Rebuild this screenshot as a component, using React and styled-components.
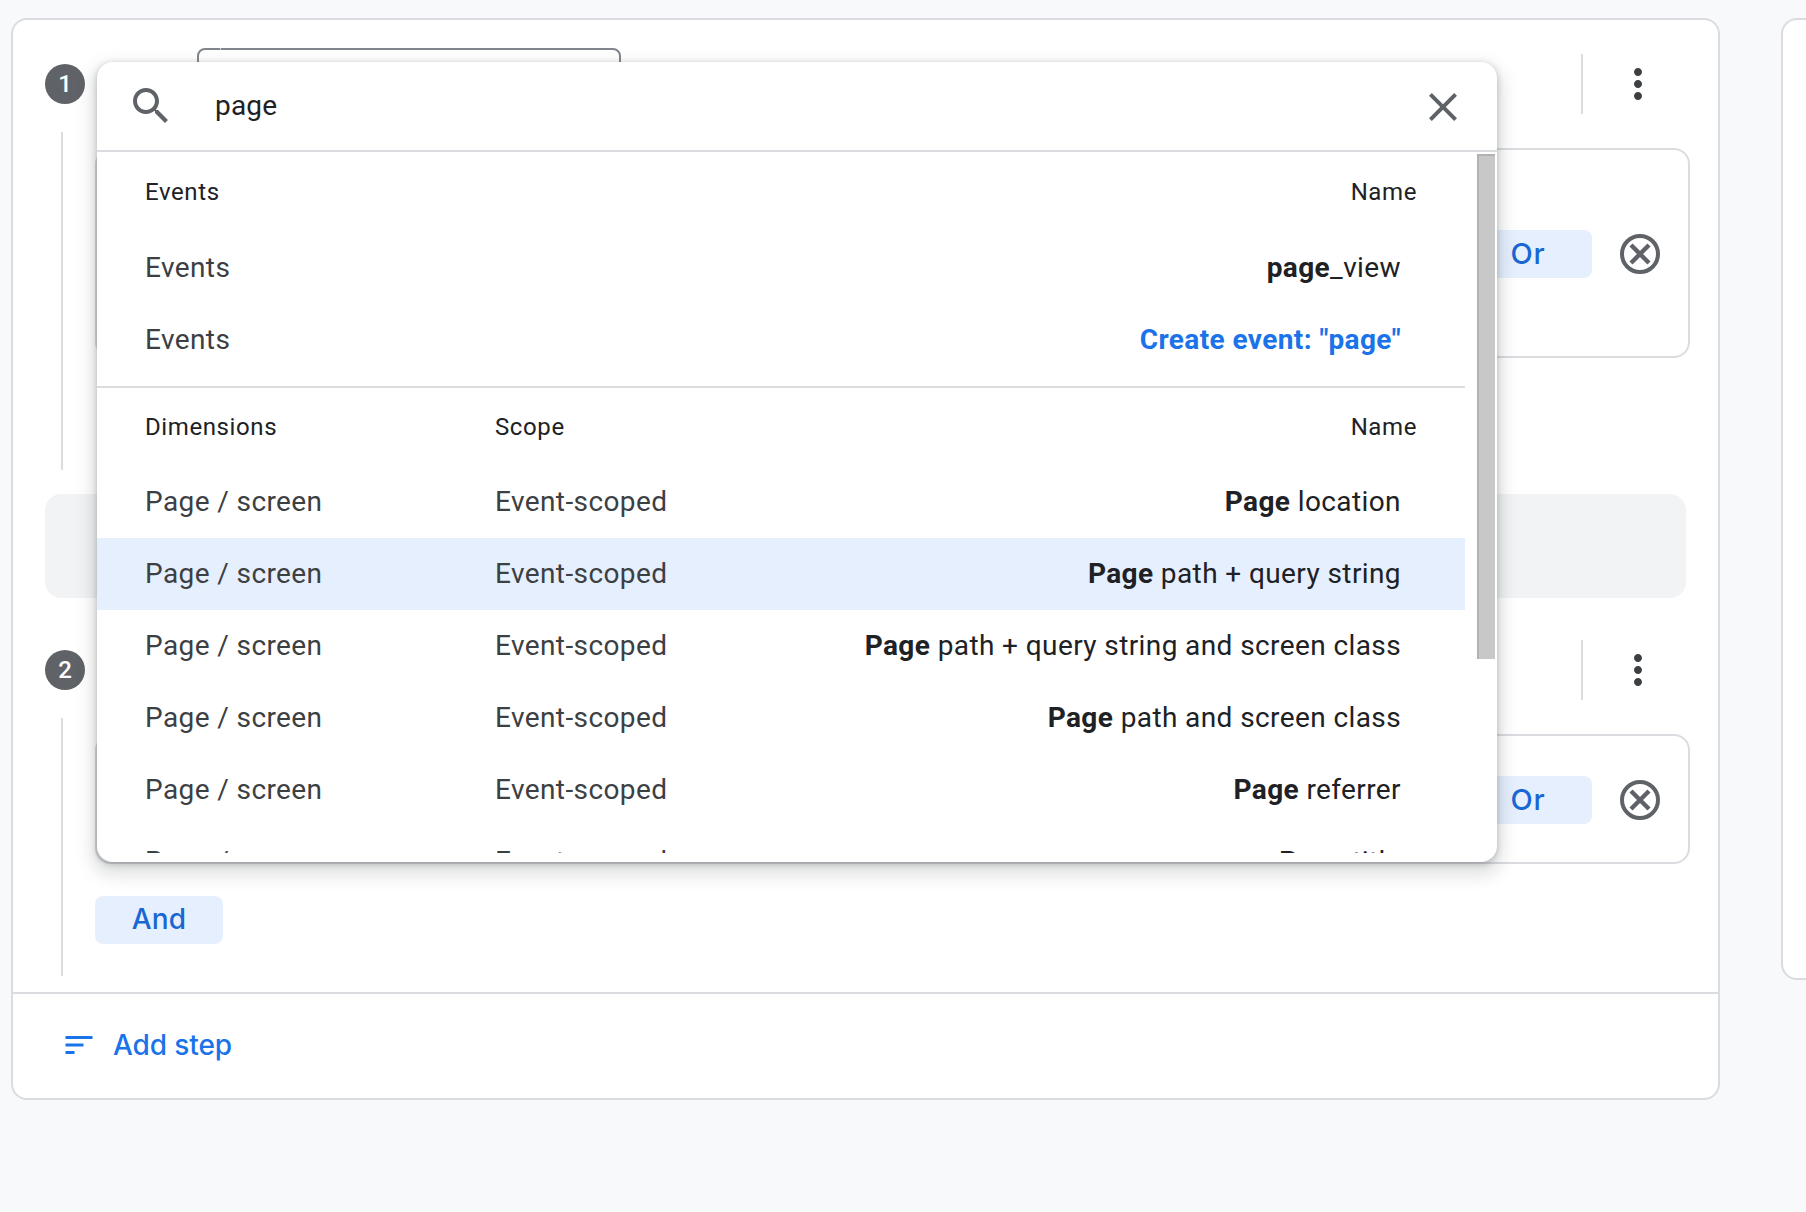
import React from "react";
import styled, { createGlobalStyle } from "styled-components";

const GlobalStyle = createGlobalStyle`
  html,
  body {
    margin: 0;
    padding: 0;
    background: #f8f9fa;
    font-family: Roboto, "Liberation Sans", sans-serif;
  }
`;

const Page = styled.div`
  display: flex;
  align-items: flex-start;
  gap: 61px;
  width: 1806px;
  height: 1212px;
  padding: 18px 0 0 11px;
  box-sizing: border-box;
  overflow: hidden;
`;

const Card = styled.section`
  position: relative;
  display: flex;
  flex-direction: column;
  flex-shrink: 0;
  width: 1709px;
  height: 1082px;
  box-sizing: border-box;
  background: #fff;
  border: 2px solid #dadce0;
  border-radius: 16px;
`;

const SideCard = styled.aside`
  flex-shrink: 0;
  width: 400px;
  height: 962px;
  box-sizing: border-box;
  background: #fff;
  border: 2px solid #dadce0;
  border-radius: 16px;
`;

const Steps = styled.div`
  flex: 1;
  padding: 28px 28px 16px 32px;
`;

const Step = styled.div`
  display: grid;
  grid-template-columns: 40px 1fr;
  column-gap: 10px;
  height: ${({ $height }) => $height}px;
`;

const Rail = styled.div`
  display: flex;
  flex-direction: column;
  padding-top: 16px;
`;

const Badge = styled.div`
  display: flex;
  align-items: center;
  justify-content: center;
  flex-shrink: 0;
  width: 40px;
  height: 40px;
  border-radius: 50%;
  background: #5f6368;
  color: #fff;
  font-size: 24px;
  font-weight: 500;
`;

const RailLine = styled.div`
  flex: 1;
  width: 2px;
  margin: 28px 0 0 16px;
  background: #dadce0;
`;

const StepHead = styled.div`
  display: flex;
  align-items: center;
  height: 72px;
  padding-right: 28px;
`;

const Field = styled.div`
  position: relative;
  width: 424px;
  height: 72px;
  margin-left: 102px;
  box-sizing: border-box;
  border: 2px solid #80868b;
  border-radius: 8px;

  &::before {
    content: "";
    position: absolute;
    top: -2px;
    left: 21px;
    width: 1px;
    height: 2px;
    background: #d5d7da;
  }
`;

const HeadDivider = styled.div`
  width: 2px;
  height: 60px;
  margin: 0 31px 0 auto;
  background: #dadce0;
`;

const IconSlot = styled.svg`
  display: block;
  flex-shrink: 0;
  width: ${({ $size }) => $size || 48}px;
  height: ${({ $size }) => $size || 48}px;
  fill: ${({ $color }) => $color || "#5f6368"};
`;

const ConditionBox = styled.div`
  display: flex;
  align-items: center;
  justify-content: flex-end;
  gap: 24px;
  height: ${({ $height }) => $height}px;
  margin-top: 28px;
  padding: 2px 24px 0 0;
  box-sizing: border-box;
  border: 2px solid #dadce0;
  border-radius: 16px;
`;

const TonalButton = styled.button`
  width: 128px;
  height: 48px;
  padding: 0 0 2px;
  border: 0;
  border-radius: 8px;
  background: #e6effe;
  color: #1967d2;
  font-family: Inter, Roboto, sans-serif;
  font-size: 28px;
  font-weight: 450;
  letter-spacing: 0.2px;
`;

const OrButton = styled(TonalButton)`
  font-size: 29px;
  letter-spacing: 0.8px;
`;

const AndButton = styled(TonalButton)`
  display: block;
  margin-top: 32px;
`;

const Connector = styled.div`
  height: 104px;
  margin: 24px 4px 36px 0;
  background: #f1f3f4;
  border-radius: 16px;
`;

const Footer = styled.footer`
  display: flex;
  align-items: center;
  gap: 16px;
  height: 106px;
  padding: 0 0 2px 48px;
  box-sizing: border-box;
  border-top: 2px solid #dadce0;
`;

const AddStep = styled.span`
  color: #1a73e8;
  font-family: Inter, Roboto, sans-serif;
  font-size: 28px;
  font-weight: 450;
  letter-spacing: -0.1px;
`;

const Popup = styled.div`
  position: absolute;
  top: 42px;
  left: 84px;
  display: flex;
  flex-direction: column;
  width: 1400px;
  height: 800px;
  overflow: hidden;
  background: #fff;
  border-radius: 16px;
  box-shadow: 0 2px 6px 0 rgba(60, 64, 67, 0.3),
    0 8px 16px 6px rgba(60, 64, 67, 0.15);
`;

const SearchBar = styled.div`
  display: flex;
  align-items: center;
  flex-shrink: 0;
  height: 90px;
  padding: 0 30px;
  box-sizing: border-box;
  border-bottom: 2px solid #dadce0;
`;

const SearchText = styled.span`
  margin-left: 40px;
  padding-bottom: 2px;
  color: #202124;
  font-size: 28px;
  letter-spacing: 0.2px;
`;

const CloseSlot = styled.div`
  margin: 2px 0 0 auto;
`;

const ListArea = styled.div`
  display: flex;
  flex-shrink: 0;
  height: 701px;
  overflow: hidden;
`;

const List = styled.div`
  width: 1368px;
  flex-shrink: 0;
`;

const Scrollbar = styled.div`
  width: 18px;
  height: 505px;
  margin: 2px 0 0 12px;
  box-sizing: border-box;
  background: #c8c8c8;
  border-left: 2px solid #b2b2b2;
  border-top: 2px solid #b2b2b2;
`;

const Section = styled.div`
  padding-bottom: ${({ $last }) => ($last ? 0 : 10)}px;
  border-bottom: ${({ $last }) => ($last ? "0" : "2px solid #dadce0")};
`;

const HeaderRow = styled.div`
  display: flex;
  align-items: center;
  height: ${({ $height }) => $height}px;
  padding: 0 48px;
  color: #202124;
  font-size: 24px;
  letter-spacing: 0.6px;
`;

const Row = styled.div`
  display: flex;
  align-items: center;
  height: 72px;
  padding: 0 64px 2px 48px;
  box-sizing: border-box;
  background: ${({ $active }) => ($active ? "#e6effe" : "transparent")};
  color: #3c4043;
  font-size: 28px;
  letter-spacing: 0.4px;
`;

const Category = styled.div`
  width: 350px;
  flex-shrink: 0;
`;

const Name = styled.div`
  margin-left: auto;
  color: ${({ $link }) => ($link ? "#1a73e8" : "#202124")};
  font-weight: ${({ $link }) => ($link ? 700 : 400)};
  white-space: nowrap;

  b {
    font-weight: 700;
  }
`;

const Icon = ({ d, size, color }) => (
  <IconSlot viewBox="0 0 24 24" $size={size} $color={color}>
    <path d={d} />
  </IconSlot>
);

const RemoveIcon = () => (
  <IconSlot viewBox="0 0 48 48" $color="none">
    <g stroke="#5f6368" strokeWidth="4" fill="none">
      <circle cx="24" cy="24" r="18" />
      <path d="M15 15L33 33M33 15L15 33" strokeWidth="4.4" />
    </g>
  </IconSlot>
);

const SEARCH =
  "M15.5 14h-.79l-.28-.27C15.41 12.59 16 11.11 16 9.5 16 5.91 13.09 3 9.5 3S3 5.91 3 9.5 5.91 16 9.5 16c1.61 0 3.09-.59 4.23-1.57l.27.28v.79l5 4.99L20.49 19l-4.99-5zm-6 0C7.01 14 5 11.99 5 9.5S7.01 5 9.5 5 14 7.01 14 9.5 11.99 14 9.5 14z";
const CLOSE =
  "M19 6.41L17.59 5 12 10.59 6.41 5 5 6.41 10.59 12 5 17.59 6.41 19 12 13.41 17.59 19 19 17.59 13.41 12z";
const MORE =
  "M12 8c1.1 0 2-.9 2-2s-.9-2-2-2-2 .9-2 2 .9 2 2 2zm0 2c-1.1 0-2 .9-2 2s.9 2 2 2 2-.9 2-2-.9-2-2-2zm0 6c-1.1 0-2 .9-2 2s.9 2 2 2 2-.9 2-2-.9-2-2-2z";
const SORT = "M3 6v2h18V6H3zm0 7h12v-2H3v2zm0 5h6v-2H3v2z";

const dimensions = [
  { rest: " location" },
  { rest: " path + query string", active: true },
  { rest: " path + query string and screen class" },
  { rest: " path and screen class" },
  { rest: " referrer" },
  { rest: " title" },
];

const StepBlock = ({ number, height, boxHeight, children }) => (
  <Step $height={height}>
    <Rail>
      <Badge>{number}</Badge>
      <RailLine />
    </Rail>
    <div>
      <StepHead>
        <Field />
        <HeadDivider />
        <Icon d={MORE} color="#3c4043" />
      </StepHead>
      <ConditionBox $height={boxHeight}>
        <OrButton>Or</OrButton>
        <RemoveIcon />
      </ConditionBox>
      {children}
    </div>
  </Step>
);

const App = () => (
  <Page>
    <GlobalStyle />
    <Card>
      <Steps>
        <StepBlock number="1" height={422} boxHeight={210} />
        <Connector />
        <StepBlock number="2" height={342} boxHeight={130}>
          <AndButton>And</AndButton>
        </StepBlock>
      </Steps>
      <Footer>
        <Icon d={SORT} size={36} color="#1a73e8" />
        <AddStep>Add step</AddStep>
      </Footer>

      <Popup>
        <SearchBar>
          <Icon d={SEARCH} />
          <SearchText>page</SearchText>
          <CloseSlot>
            <Icon d={CLOSE} />
          </CloseSlot>
        </SearchBar>
        <ListArea>
          <List>
            <Section>
              <HeaderRow $height={80}>
                <Category>Events</Category>
                <Name>Name</Name>
              </HeaderRow>
              <Row>
                <Category>Events</Category>
                <Name>
                  <b>page</b>_view
                </Name>
              </Row>
              <Row>
                <Category>Events</Category>
                <Name $link>Create event: "page"</Name>
              </Row>
            </Section>
            <Section $last>
              <HeaderRow $height={78}>
                <Category>Dimensions</Category>
                <span>Scope</span>
                <Name>Name</Name>
              </HeaderRow>
              {dimensions.map((item) => (
                <Row key={item.rest} $active={item.active}>
                  <Category>Page / screen</Category>
                  <span>Event-scoped</span>
                  <Name>
                    <b>Page</b>
                    {item.rest}
                  </Name>
                </Row>
              ))}
            </Section>
          </List>
          <Scrollbar />
        </ListArea>
      </Popup>
    </Card>
    <SideCard />
  </Page>
);

export default App;
